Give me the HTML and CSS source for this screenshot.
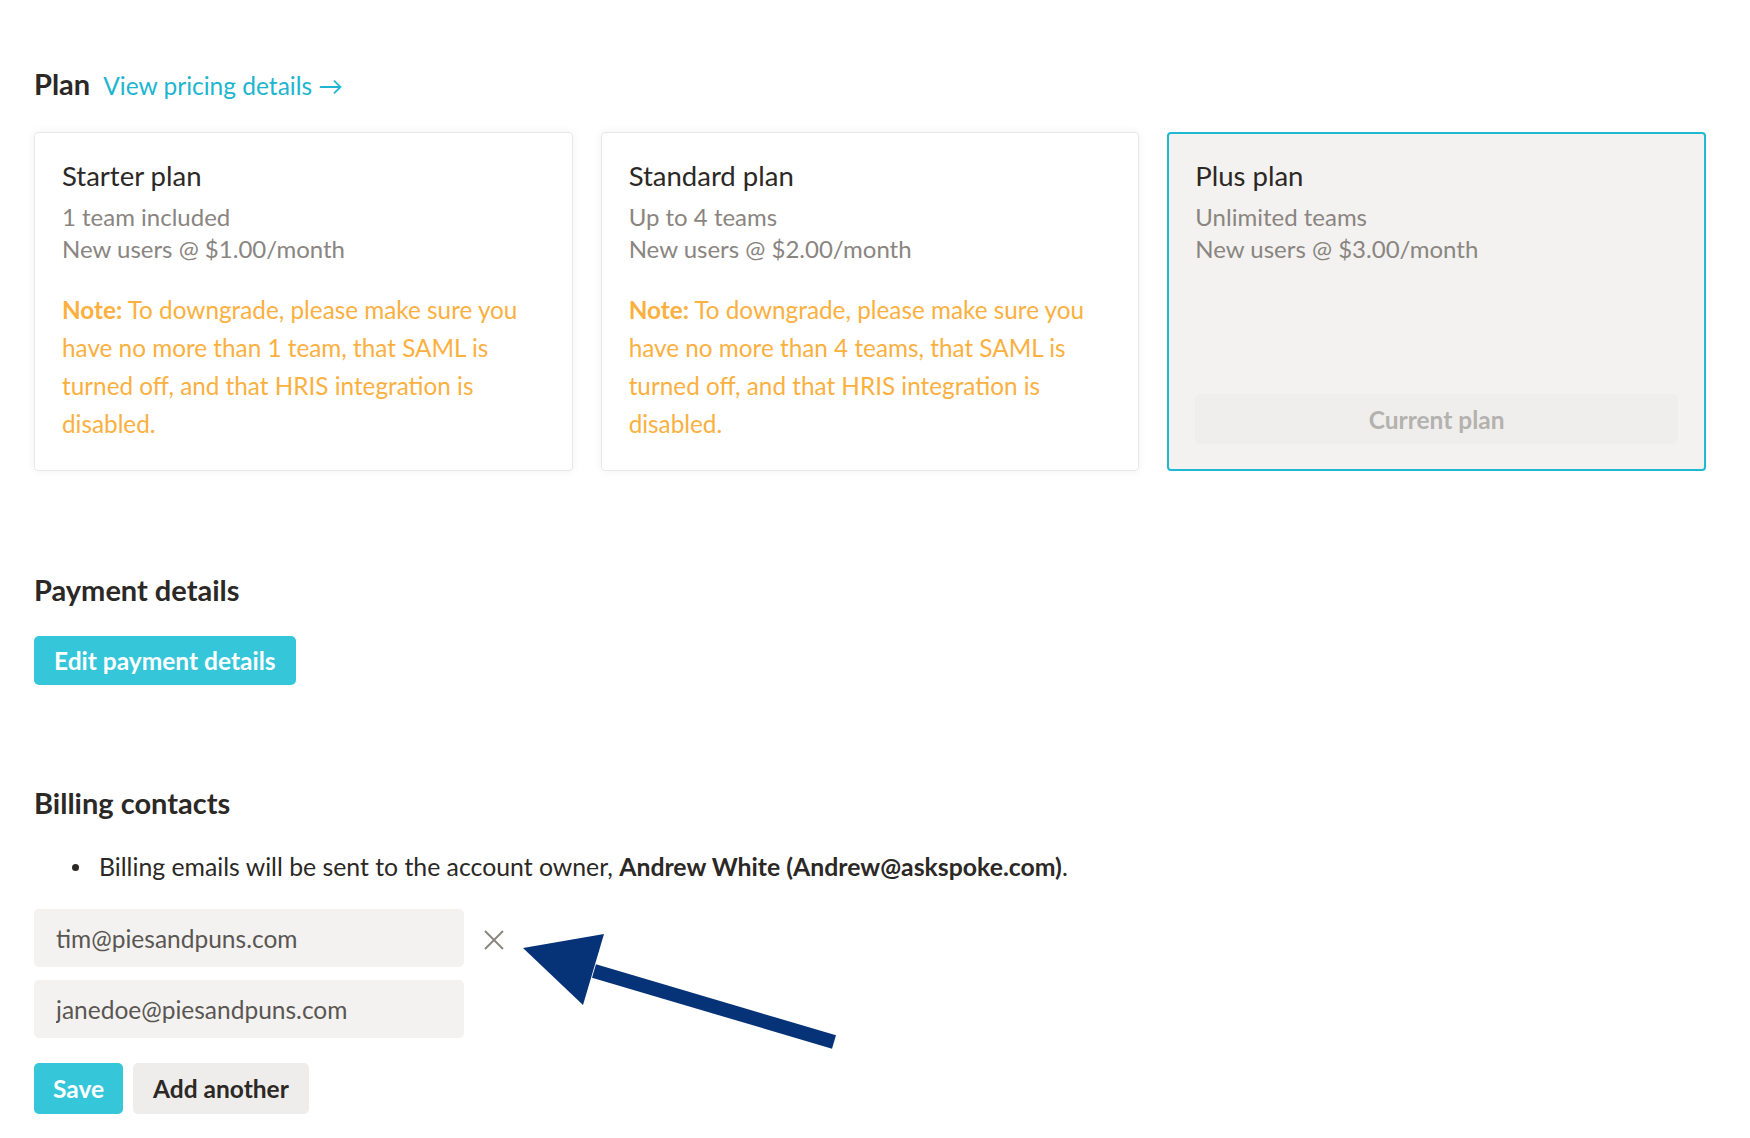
FILE: index.html
```html
<!DOCTYPE html>
<html lang="en">

<head>
  <meta charset="UTF-8" />
  <meta name="viewport" content="width=device-width, initial-scale=1.0" />
  <title>Billing</title>
  <link rel="stylesheet" href="styles.css">
</head>

<body>
  <main class="page">
    <section class="plan">
      <div class="section-head">
        <h2>Plan</h2>
        <a href="javascript:;" class="link">View pricing details &rarr;</a>
      </div>
      <div class="plans">
        <div class="card">
          <h3>Starter plan</h3>
          <p class="meta">1 team included</p>
          <p class="meta">New users @ $1.00/month</p>
          <p class="note"><b>Note:</b> To downgrade, please make sure you have no more than 1 team, that SAML is turned off, and that HRIS integration is disabled.</p>
        </div>
        <div class="card">
          <h3>Standard plan</h3>
          <p class="meta">Up to 4 teams</p>
          <p class="meta">New users @ $2.00/month</p>
          <p class="note"><b>Note:</b> To downgrade, please make sure you have no more than 4 teams, that SAML is turned off, and that HRIS integration is disabled.</p>
        </div>
        <div class="card current">
          <h3>Plus plan</h3>
          <p class="meta">Unlimited teams</p>
          <p class="meta">New users @ $3.00/month</p>
          <button class="btn btn-disabled" disabled>Current plan</button>
        </div>
      </div>
    </section>

    <section class="payment">
      <h2>Payment details</h2>
      <button class="btn btn-primary">Edit payment details</button>
    </section>

    <section class="billing">
      <h2>Billing contacts</h2>
      <ul class="owner">
        <li>Billing emails will be sent to the account owner, <b>Andrew White (Andrew@askspoke.com)</b>.</li>
      </ul>
      <div class="contacts">
        <div class="contact">
          <input type="text" value="tim@piesandpuns.com" />
          <a href="javascript:;" class="remove" title="Remove">
            <svg width="22" height="22" viewBox="0 0 22 22"><path d="M2 2L20 20M20 2L2 20" stroke="#8b8682" stroke-width="2" fill="none" /></svg>
          </a>
          <!-- annotation arrow -->
          <svg class="pointer" width="360" height="140" viewBox="0 0 360 140">
            <line x1="94" y1="50" x2="334" y2="121" stroke="#063278" stroke-width="14" />
            <polygon points="23,27 104,13 83,84" fill="#063278" />
          </svg>
        </div>
        <div class="contact">
          <input type="text" value="janedoe@piesandpuns.com" />
        </div>
      </div>
      <div class="actions">
        <button class="btn btn-primary">Save</button>
        <button class="btn btn-light">Add another</button>
      </div>
    </section>
  </main>
</body>

</html>
```

FILE: styles.css
```css
* {
  margin: 0;
  padding: 0;
  box-sizing: border-box;
}

body {
  font-family: Lato, "Open Sans", sans-serif;
  color: #2b2826;
  background: #fff;
}

.page {
  padding: 67px 44px 0 34px;
}

h2 {
  font-size: 29px;
  line-height: 34px;
  font-weight: 700;
}

.section-head {
  display: flex;
  align-items: baseline;
  gap: 13px;
}

.link {
  color: #1db5cf;
  text-decoration: none;
  font-size: 24.5px;
}

.plans {
  margin-top: 31px;
  display: grid;
  grid-template-columns: repeat(3, 1fr);
  gap: 28px;
}

.card {
  display: flex;
  flex-direction: column;
  min-height: 339px;
  padding: 26px 27px 24px;
  border: 1px solid #e9e8e6;
  border-radius: 4px;
  box-shadow: 0 0 10px rgba(0, 0, 0, 0.06);
}

.card h3 {
  font-size: 27.5px;
  line-height: 34px;
  font-weight: 400;
  margin-bottom: 8px;
}

.card .meta {
  font-size: 24px;
  line-height: 32px;
  color: #8a8581;
}

.card .note {
  margin-top: 26px;
  font-size: 24.3px;
  line-height: 38px;
  color: #fbb040;
}

.card .note b {
  font-weight: 700;
}

.card.current {
  background: #f3f2f0;
  border: 2px solid #1fb9d1;
  padding: 25px 26px 25px;
  box-shadow: none;
}

.btn {
  font-family: inherit;
  font-size: 24.5px;
  font-weight: 700;
  border: none;
  border-radius: 5px;
  padding: 0 20px;
  height: 50px;
  cursor: pointer;
}

.btn-primary {
  background: #35c6d9;
  color: #fff;
}

.btn-light {
  background: #eeedeb;
  color: #2b2826;
}

.btn-disabled {
  margin-top: auto;
  width: 100%;
  background: #efeeec;
  color: #b4b2af;
  cursor: default;
}

.payment {
  margin-top: 102px;
}

.payment .btn {
  margin-top: 29px;
  height: 49px;
}

.billing {
  margin-top: 101px;
}

.owner {
  margin-top: 31px;
  padding-left: 38px;
  list-style: none;
  font-size: 24.8px;
  line-height: 32px;
}

.owner li {
  display: flex;
  align-items: center;
  white-space: pre;
}

.owner li::before {
  content: "";
  width: 7px;
  height: 7px;
  border-radius: 50%;
  background: #2b2826;
  margin-right: 20px;
}

.owner b {
  font-weight: 700;
}

.contacts {
  margin-top: 26px;
  display: flex;
  flex-direction: column;
  gap: 13px;
}

.contact {
  position: relative;
  display: flex;
  align-items: center;
  gap: 19px;
}

.contact input {
  width: 430px;
  height: 58px;
  padding: 0 22px;
  border: none;
  border-radius: 5px;
  background: #f3f2f0;
  font-family: inherit;
  font-size: 24.5px;
  color: #5a5653;
  outline: none;
}

.remove {
  display: flex;
  margin-top: 3px;
}

.pointer {
  position: absolute;
  left: 466px;
  top: 12px;
}

.actions {
  margin-top: 25px;
  display: flex;
  gap: 10px;
}

.actions .btn {
  height: 51px;
}

.actions .btn-primary {
  padding: 0 19px;
}
```
